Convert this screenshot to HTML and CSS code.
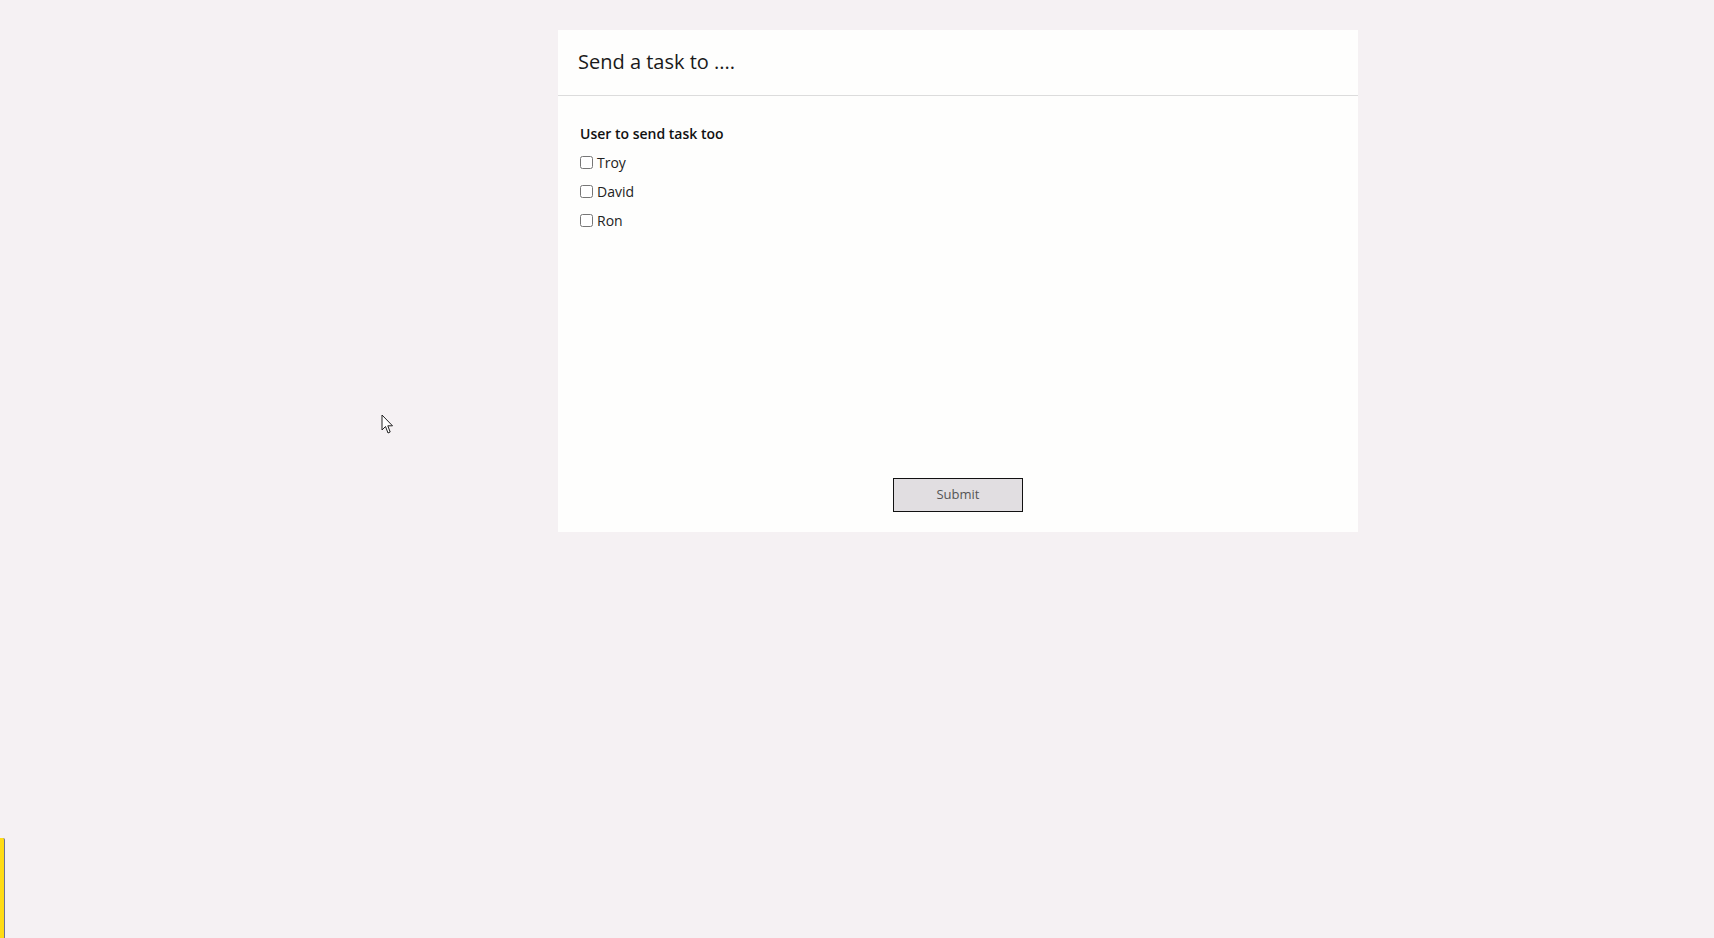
FILE: index.html
```html
<!DOCTYPE html>
<html lang="en">
<head>
  <meta charset="UTF-8" />
  <meta name="viewport" content="width=device-width, initial-scale=1.0"/>
  <title>Send a task</title>
  <link rel="stylesheet" href="styles.css">
</head>
<body>
  <main class="task-card">
    <header class="task-header">
      <h1>Send a task to ....</h1>
    </header>

    <form class="task-form">
      <div class="task-body">
        <p class="field-label">User to send task too</p>
        <label class="option"><input type="checkbox" name="user" value="troy" /> <span>Troy</span></label>
        <label class="option"><input type="checkbox" name="user" value="david" /> <span>David</span></label>
        <label class="option"><input type="checkbox" name="user" value="ron" /> <span>Ron</span></label>
      </div>

      <div class="task-footer">
        <button type="button" class="submit-button">Submit</button>
      </div>
    </form>
  </main>

  <!-- mouse pointer left in the capture -->
  <svg class="pointer" width="13" height="21" viewBox="0 0 13 21" aria-hidden="true">
    <path d="M1 1 L1 16 L4.5 12.5 L7 19 L9.2 18 L6.8 11.8 L11.5 11.8 Z" fill="#fff" stroke="#222" stroke-width="1" stroke-linejoin="round"/>
  </svg>

  <div class="edge-tab" aria-hidden="true"></div>
</body>
</html>
```

FILE: styles.css
```css
/* Basic reset */
* {
  margin: 0;
  padding: 0;
  box-sizing: border-box;
}

html, body {
  height: 100%;
}

body {
  font-family: 'Open Sans', 'Noto Sans', sans-serif;
  background-color: #f5f1f3;
  color: #1b1b1b;
  padding: 30px 0 0 558px;
  overflow: hidden;
}

.task-card {
  width: 800px;
  height: 502px;
  background-color: #fefefd;
  display: flex;
  flex-direction: column;
}

.task-header {
  height: 66px;
  padding: 18px 20px 0;
  border-bottom: 1px solid #dcdcdc;
}

.task-header h1 {
  font-size: 20px;
  font-weight: 400;
  line-height: 28px;
  color: #1a1a1a;
}

.task-form {
  flex: 1;
  display: flex;
  flex-direction: column;
}

.task-body {
  flex: 1;
  padding: 28px 22px 0;
}

.field-label {
  font-size: 14px;
  font-weight: 600;
  line-height: 20px;
  color: #111;
  margin-bottom: 4px;
}

.option {
  display: flex;
  align-items: center;
  gap: 4px;
  height: 29px;
  font-size: 14px;
  color: #222;
}

.option input {
  width: 13px;
  height: 13px;
  margin: 0;
}

.task-footer {
  display: flex;
  justify-content: center;
  padding-bottom: 20px;
}

.submit-button {
  width: 130px;
  height: 34px;
  padding-bottom: 2px;
  background-color: #e1dee1;
  border: 1px solid #111;
  border-radius: 0;
  font-family: 'Open Sans', 'Noto Sans', sans-serif;
  font-size: 13px;
  color: #555;
  cursor: pointer;
}

.pointer {
  position: absolute;
  left: 381px;
  top: 414px;
}

.edge-tab {
  position: fixed;
  left: 0;
  bottom: 0;
  width: 5px;
  height: 100px;
  background-color: #ffdc14;
  border-right: 1px solid #6d7190;
  border-top-right-radius: 2px;
}
```
